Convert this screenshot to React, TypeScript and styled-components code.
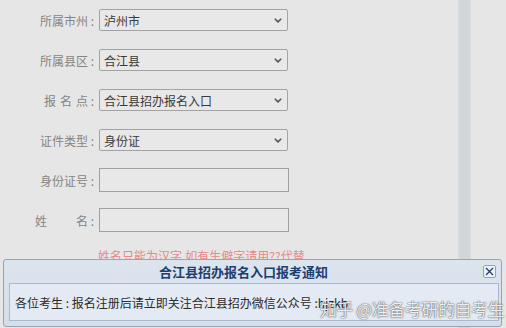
import React, { FunctionComponent } from 'react'
import styled, { createGlobalStyle } from 'styled-components'

const GlobalStyle = createGlobalStyle`
  html, body {
    margin: 0;
    padding: 0;
    background: #e6e6e6;
    font-family: "Noto Sans CJK SC", "Noto Sans", sans-serif;
  }
`

const Page = styled.div`
  position: relative;
  display: flex;
  width: 506px;
  height: 328px;
  overflow: hidden;
  background: #e6e6e6;
`

const Main = styled.div`
  width: 458px;
  flex-shrink: 0;
`

const Stripe = styled.div`
  width: 13px;
  flex-shrink: 0;
  background: linear-gradient(to right, #dcdee0 0, #d3d6d9 2px, #d3d6d9 11px, #dcdee0 13px);
`

const Form = styled.div`
  display: flex;
  flex-direction: column;
`

const Row = styled.div`
  display: grid;
  grid-template-columns: 97px 1fr;
  column-gap: 2px;
  height: 40px;
  align-items: center;
`

const Label = styled.span`
  display: flex;
  justify-content: flex-end;
  font-size: 12px;
  color: #858585;
  white-space: pre;
`

const LabelChars = styled.span<{ $gap?: number }>`
  display: flex;
  gap: ${(p) => p.$gap ?? 0}px;
`

const Colon = styled.span`
  width: 9px;
  text-align: center;
`

const Select = styled.div`
  width: 189px;
  height: 22px;
  box-sizing: border-box;
  border: 1px solid #a3a3a3;
  border-radius: 2px;
  background: #e8e8e8;
  display: flex;
  align-items: center;
  justify-content: space-between;
  padding: 0 5px 0 4px;
  font-size: 12px;
  color: #3a3a3a;
`

const Input = styled.div`
  width: 190px;
  height: 24px;
  box-sizing: border-box;
  border: 1px solid #a0a0a0;
  background: #e8e8e8;
`

const Hint = styled.div`
  padding: 8px 0 0 98px;
  font-size: 12px;
  line-height: 16px;
  color: #e58a8a;
`

const Dialog = styled.div`
  position: absolute;
  left: 3px;
  top: 259px;
  width: 499px;
  height: 68px;
  box-sizing: border-box;
  border: 1px solid #98a4b3;
  border-radius: 3px;
  background: linear-gradient(to bottom, #dce4ee, #d5dde8);
  display: flex;
  flex-direction: column;
`

const DialogHead = styled.div`
  height: 23px;
  display: flex;
  align-items: center;
  padding: 0 5px 0 0;
`

const DialogTitle = styled.div`
  flex: 1;
  text-align: center;
  font-size: 13px;
  font-weight: bold;
  color: #1c3f72;
`

const Close = styled.div`
  width: 13px;
  height: 13px;
  box-sizing: border-box;
  border: 1px solid #8ea4c4;
  border-radius: 2px;
  background: #eef2f8;
  display: flex;
  align-items: center;
  justify-content: center;
`

const DialogBody = styled.div`
  margin: 0 2px 0 5px;
  height: 38px;
  box-sizing: border-box;
  border: 1px solid #a9b9cf;
  background: #e4eaf3;
  display: flex;
  align-items: center;
  padding-left: 5px;
  font-size: 12px;
  color: #2b2b2b;
  white-space: pre;
`

const Watermark = styled.div`
  position: absolute;
  left: 320px;
  top: 296px;
  font-size: 17px;
  color: rgba(255, 255, 255, 0.92);
  text-shadow: 0 0 1px rgba(0, 0, 0, 0.7), 0 0 2px rgba(0, 0, 0, 0.45);
  white-space: nowrap;
  letter-spacing: -0.5px;
`

const Chevron: FunctionComponent = () => (
  <svg width="8" height="5" viewBox="0 0 8 5">
    <path d="M0.8 0.8 L4 3.9 L7.2 0.8" fill="none" stroke="#555" strokeWidth="1.6" />
  </svg>
)

interface FieldLabelProps {
  text: string
  gap?: number
}

const FieldLabel: FunctionComponent<FieldLabelProps> = ({ text, gap }) => (
  <Label>
    <LabelChars $gap={gap}>
      {text.split('').map((c, i) => (
        <span key={i}>{c}</span>
      ))}
    </LabelChars>
    <Colon>:</Colon>
  </Label>
)

const selects = [
  { label: '所属市州', value: '泸州市' },
  { label: '所属县区', value: '合江县' },
  { label: '报名点', value: '合江县招办报名入口', gap: 4 },
  { label: '证件类型', value: '身份证' },
]

const inputs = [{ label: '身份证号' }, { label: '姓名', gap: 29 }]

const App: FunctionComponent = () => {
  return (
    <Page>
      <GlobalStyle />
      <Main>
        <Form>
          {selects.map(({ label, value, gap }) => (
            <Row key={label}>
              <FieldLabel text={label} gap={gap} />
              <Select>
                <span>{value}</span>
                <Chevron />
              </Select>
            </Row>
          ))}
          {inputs.map(({ label, gap }) => (
            <Row key={label}>
              <FieldLabel text={label} gap={gap} />
              <Input />
            </Row>
          ))}
          <Hint>姓名只能为汉字,如有生僻字请用??代替</Hint>
        </Form>
      </Main>
      <Stripe />
      <Dialog>
        <DialogHead>
          <DialogTitle>合江县招办报名入口报考通知</DialogTitle>
          <Close>
            <svg width="9" height="9" viewBox="0 0 9 9">
              <path d="M1 1 L8 8 M8 1 L1 8" stroke="#1c3f72" strokeWidth="1.3" />
            </svg>
          </Close>
        </DialogHead>
        <DialogBody>各位考生 : 报名注册后请立即关注合江县招办微信公众号 :hjzkb</DialogBody>
      </Dialog>
      <Watermark>知乎 @准备考研的自考生</Watermark>
    </Page>
  )
}

export default App
